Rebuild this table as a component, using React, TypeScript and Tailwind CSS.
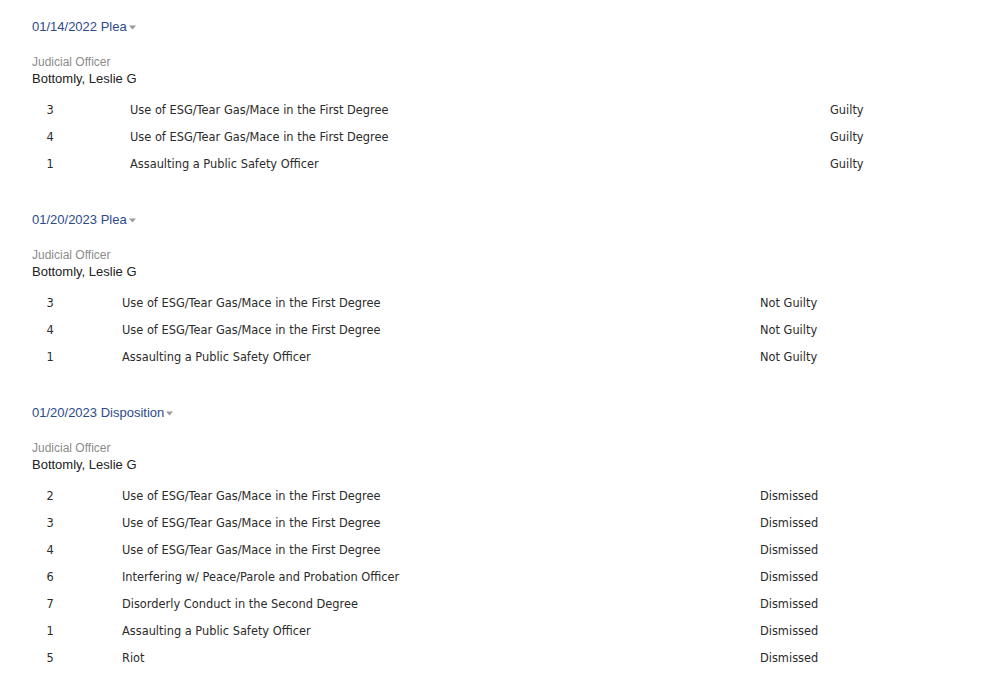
import React from "react";

type Charge = { num: string; desc: string; result: string };

const pleaCharges: Charge[] = [
  { num: "3", desc: "Use of ESG/Tear Gas/Mace in the First Degree", result: "Guilty" },
  { num: "4", desc: "Use of ESG/Tear Gas/Mace in the First Degree", result: "Guilty" },
  { num: "1", desc: "Assaulting a Public Safety Officer", result: "Guilty" },
];

const plea2Charges: Charge[] = [
  { num: "3", desc: "Use of ESG/Tear Gas/Mace in the First Degree", result: "Not Guilty" },
  { num: "4", desc: "Use of ESG/Tear Gas/Mace in the First Degree", result: "Not Guilty" },
  { num: "1", desc: "Assaulting a Public Safety Officer", result: "Not Guilty" },
];

const dispCharges: Charge[] = [
  { num: "2", desc: "Use of ESG/Tear Gas/Mace in the First Degree", result: "Dismissed" },
  { num: "3", desc: "Use of ESG/Tear Gas/Mace in the First Degree", result: "Dismissed" },
  { num: "4", desc: "Use of ESG/Tear Gas/Mace in the First Degree", result: "Dismissed" },
  { num: "6", desc: "Interfering w/ Peace/Parole and Probation Officer", result: "Dismissed" },
  { num: "7", desc: "Disorderly Conduct in the Second Degree", result: "Dismissed" },
  { num: "1", desc: "Assaulting a Public Safety Officer", result: "Dismissed" },
  { num: "5", desc: "Riot", result: "Dismissed" },
];

function Section(props: { title: string; charges: Charge[]; wide?: boolean; first?: boolean }) {
  return (
    <div className={props.first ? "" : "mt-[32px]"}>
      <div className="flex items-center h-[20px] text-[13px] text-[#2c4a8c] font-['Liberation_Sans',Arial,sans-serif]">
        <span>{props.title}</span>
        <svg width="9" height="5" viewBox="0 0 9 5" className="ml-[1px] mt-[1px]">
          <path d="M1 0.5 L8 0.5 L4.5 4.5 Z" fill="#9a9a9a" />
        </svg>
      </div>
      <div className="mt-[17px] h-[16px] leading-[16px] text-[12px] text-[#8c8c8c] font-['Liberation_Sans',Arial,sans-serif]">
        Judicial Officer
      </div>
      <div className="h-[18px] leading-[18px] text-[13px] text-[#222] font-['Liberation_Sans',Arial,sans-serif]">
        Bottomly, Leslie G
      </div>
      <div className="mt-[9px] font-['DejaVu_Sans',Verdana,sans-serif] text-[11.4px] text-[#2b2b2b]">
        {props.charges.map((c, i) => (
          <div key={i} className="flex items-center h-[27px]">
            <span className="w-[36px] text-center">{c.num}</span>
            <span className={props.wide ? "ml-[62px] w-[700px]" : "ml-[54px] w-[638px]"}>{c.desc}</span>
            <span>{c.result}</span>
          </div>
        ))}
      </div>
    </div>
  );
}

export default function App() {
  return (
    <div className="w-[1001px] min-h-[688px] bg-white pl-[32px] pt-[17px]">
      <Section title="01/14/2022 Plea" charges={pleaCharges} wide first />
      <Section title="01/20/2023 Plea" charges={plea2Charges} />
      <Section title="01/20/2023 Disposition" charges={dispCharges} />
    </div>
  );
}
